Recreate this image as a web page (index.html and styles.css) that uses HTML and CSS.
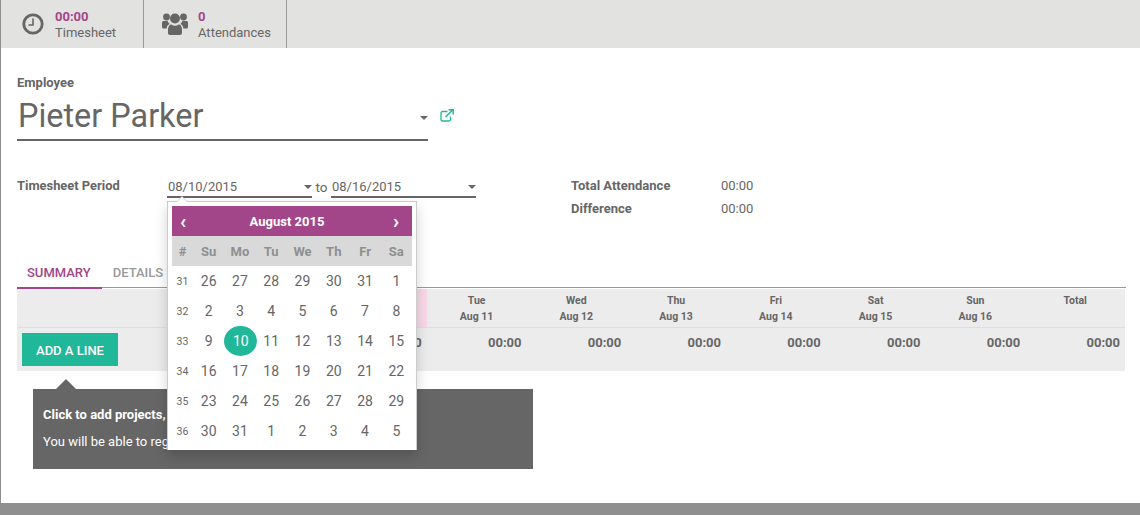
FILE: index.html
```html
<!DOCTYPE html>
<html lang="en">
<head>
<meta charset="utf-8">
<title>Timesheet</title>
<link rel="stylesheet" href="styles.css">
</head>
<body>
<div class="page">
  <div class="buttons">
    <div class="stat stat-time">
      <svg class="stat-icon" width="24" height="24" viewBox="0 0 24 24"><circle cx="12" cy="12" r="9.2" fill="none" stroke="#666" stroke-width="2.8"/><path d="M12 6.5V13H7.5" fill="none" stroke="#666" stroke-width="1.6"/></svg>
      <div class="stat-text"><span class="stat-value">00:00</span><span class="stat-label">Timesheet</span></div>
    </div>
    <div class="stat stat-att">
      <svg class="stat-icon" width="28" height="26" viewBox="0 0 28 26"><g fill="#666"><circle cx="5.5" cy="6" r="3.4"/><circle cx="22.5" cy="6" r="3.4"/><circle cx="14" cy="7.5" r="5"/><path d="M1 11.5c0-1 .8-1.500 2-1.500h3.600c.5 1.300 1.200 2.200 2.100 3-2 .7-3 2.200-3 4.500H2.500C1.500 17.500 1 16.800 1 16z"/><path d="M27 11.500c0-1-.8-1.500-2-1.500h-3.600c-.5 1.300-1.200 2.200-2.100 3 2 .7 3 2.200 3 4.500h3.200c1 0 1.500-.7 1.500-1.500z"/><path d="M7 19c0-3 1.300-5.500 3.500-5.500 1 .8 2.200 1.300 3.500 1.300s2.500-.5 3.500-1.300C20.200 13.500 21 16 21 19v3c0 1.300-.9 2-2 2H9c-1.200 0-2-.7-2-2z"/></g></svg>
      <div class="stat-text"><span class="stat-value">0</span><span class="stat-label">Attendances</span></div>
    </div>
  </div>

  <div class="sheet">
    <div class="employee-label">Employee</div>
    <div class="employee-row">
      <div class="employee-field"><span class="employee-name">Pieter Parker</span><span class="caret"></span></div>
      <svg class="ext-link" width="14" height="13" viewBox="0 0 14 13"><path d="M10.500 7.500v3c0 .8-.6 1.500-1.500 1.500H2.500C1.700 12 1 11.300 1 10.500V4c0-.8.7-1.500 1.500-1.500h5" fill="none" stroke="#21b799" stroke-width="1.300"/><path d="M5.500 8L12 1.500M8.500 .8h4.700v4.700" fill="none" stroke="#21b799" stroke-width="1.500"/></svg>
    </div>

    <div class="period-row">
      <div class="period-left">
        <span class="period-label">Timesheet Period</span>
        <div class="date-field"><span>08/10/2015</span><span class="caret"></span></div>
        <span class="to">to</span>
        <div class="date-field date-end"><span>08/16/2015</span><span class="caret"></span></div>
      </div>
      <div class="totals">
        <span class="total-label">Total Attendance</span><span class="total-value">00:00</span>
        <span class="total-label">Difference</span><span class="total-value">00:00</span>
      </div>
    </div>

    <div class="tabs">
      <span class="tab tab-active">SUMMARY</span>
      <span class="tab">DETAILS</span>
    </div>

    <table class="grid">
      <thead>
        <tr>
          <th class="col-first"></th>
          <th class="today">Mon<br>Aug 10</th>
          <th>Tue<br>Aug 11</th>
          <th>Wed<br>Aug 12</th>
          <th>Thu<br>Aug 13</th>
          <th>Fri<br>Aug 14</th>
          <th>Sat<br>Aug 15</th>
          <th>Sun<br>Aug 16</th>
          <th class="th-total">Total</th>
        </tr>
      </thead>
      <tbody>
        <tr>
          <td class="col-first"><span class="add-line">ADD A LINE</span></td>
          <td>00:00</td><td>00:00</td><td>00:00</td><td>00:00</td><td>00:00</td><td>00:00</td><td>00:00</td><td>00:00</td>
        </tr>
      </tbody>
    </table>
  </div>

  <div class="tip">
    <p class="tip-strong">Click to add projects, contracts or analytic accounts.</p>
    <p>You will be able to register your working hours and activities.</p>
  </div>

  <div class="picker">
    <div class="picker-head"><span class="nav">‹</span><span class="picker-title">August 2015</span><span class="nav nav-next">›</span></div>
    <table class="cal">
      <thead>
        <tr><th>#</th><th>Su</th><th>Mo</th><th>Tu</th><th>We</th><th>Th</th><th>Fr</th><th>Sa</th></tr>
      </thead>
      <tbody>
        <tr><td class="wk">31</td><td>26</td><td>27</td><td>28</td><td>29</td><td>30</td><td>31</td><td>1</td></tr>
        <tr><td class="wk">32</td><td>2</td><td>3</td><td>4</td><td>5</td><td>6</td><td>7</td><td>8</td></tr>
        <tr><td class="wk">33</td><td>9</td><td><span class="sel">10</span></td><td>11</td><td>12</td><td>13</td><td>14</td><td>15</td></tr>
        <tr><td class="wk">34</td><td>16</td><td>17</td><td>18</td><td>19</td><td>20</td><td>21</td><td>22</td></tr>
        <tr><td class="wk">35</td><td>23</td><td>24</td><td>25</td><td>26</td><td>27</td><td>28</td><td>29</td></tr>
        <tr><td class="wk">36</td><td>30</td><td>31</td><td>1</td><td>2</td><td>3</td><td>4</td><td>5</td></tr>
      </tbody>
    </table>
  </div>
</div>
<div class="footer-bar"></div>
</body>
</html>
```
FILE: styles.css
```css
* { box-sizing: border-box; }
html, body { margin: 0; height: 100%; overflow: hidden; }
body {
  width: 1140px;
  height: 515px;
  display: flex;
  flex-direction: column;
  background: #fff;
  font-family: Roboto, "Liberation Sans", sans-serif;
  color: #666;
  font-size: 13px;
}
.page {
  position: relative;
  flex: 1;
  border-left: 1px solid #8f8f8f;
}
.footer-bar { height: 12px; background: #8f8f8f; }

.buttons { display: flex; height: 48px; background: #e2e2e0; }
.stat {
  display: flex;
  align-items: center;
  border-right: 1px solid #999;
  width: 143px;
  padding-left: 20px;
  gap: 10px;
}
.stat-att { padding-left: 17px; gap: 9px; }
.stat-text { display: flex; flex-direction: column; line-height: 16px; padding-top: 2px; }
.stat-value { color: #a24689; font-weight: 700; font-size: 13px; }
.stat-label { font-size: 13px; color: #666; }

.sheet { padding: 27px 14px 0 16px; }
.employee-label { font-weight: 700; font-size: 13px; line-height: 16px; }
.employee-row { display: flex; align-items: flex-start; margin-top: 1px; }
.employee-field {
  width: 411px;
  height: 49px;
  border-bottom: 2px solid #666;
  display: flex;
  justify-content: space-between;
  align-items: center;
}
.employee-name { font-size: 32.400px; line-height: 38px; padding-left: 1px; }
.employee-field .caret { margin: 4px 0 0; }
.ext-link { margin: 17px 0 0 12px; }
.caret {
  width: 0;
  height: 0;
  border-left: 4px solid transparent;
  border-right: 4px solid transparent;
  border-top: 4px solid #666;
  margin-top: 1px;
}

.period-row { display: flex; margin-top: 37px; }
.period-left { display: flex; align-items: flex-start; width: 554px; }
.period-label { width: 150px; font-weight: 700; line-height: 16px; font-size: 12.900px; }
.date-field {
  width: 145px;
  height: 20px;
  border-bottom: 2px solid #666;
  display: flex;
  justify-content: space-between;
  align-items: center;
  font-size: 13px;
  line-height: 16px;
  padding: 0 0 1px 1px;
}
.to { width: 19px; text-align: center; line-height: 18px; font-size: 13.500px; }
.totals {
  display: grid;
  grid-template-columns: 150px auto;
  row-gap: 7px;
  line-height: 16px;
}
.total-label { font-weight: 700; }

.tabs { display: flex; margin-top: 48px; height: 23px; border-bottom: 1px solid #999; }
.tab { font-size: 13px; font-weight: 500; color: #999; padding: 0 10px 0 11px; line-height: 15px; margin-bottom: -1px; }
.tab-active { color: #a24689; padding: 0 11px 0 10px; border-bottom: 2px solid #a24689; height: 24px; }

.grid {
  width: 1108px;
  margin-top: 1px;
  border-collapse: collapse;
  table-layout: fixed;
  background: #ececec;
}
.grid th {
  width: 99.750px;
  height: 38px;
  border-bottom: 1px solid #ddd;
  font-size: 10.500px;
  line-height: 16px;
  font-weight: 700;
  text-align: center;
  vertical-align: top;
  padding: 4px 0 0;
  color: #666;
}
.grid th.col-first, .grid td.col-first { width: 310px; }
.grid th.today { background: #f9d8e8; }
.grid td {
  height: 44px;
  font-size: 13px;
  font-weight: 700;
  text-align: right;
  vertical-align: top;
  padding: 7px 5px 0 0;
  line-height: 16px;
}
.grid td.col-first { text-align: left; padding: 5px 0 0 5px; }
.add-line {
  display: inline-block;
  width: 96px;
  height: 33px;
  line-height: 35px;
  text-align: center;
  background: #21b799;
  color: #fff;
  font-size: 13px;
  font-weight: 500;
}

.tip {
  position: absolute;
  left: 32px;
  top: 389px;
  width: 500px;
  height: 80px;
  padding: 19px 10px 0;
  background: #666;
  color: #fff;
  font-size: 13px;
  line-height: 14px;
}
.tip::before {
  content: "";
  position: absolute;
  left: 23px;
  top: -10px;
  border-left: 10px solid transparent;
  border-right: 10px solid transparent;
  border-bottom: 10px solid #666;
}
.tip p { margin: 0 0 13px; white-space: nowrap; }
.tip-strong { font-weight: 700; }

.picker {
  position: absolute;
  left: 166px;
  top: 201px;
  width: 250px;
  height: 249px;
  padding: 4px;
  background: #fff;
  border: 1px solid #ccc;
  border-width: 1px 1px 0;
  box-shadow: 0 6px 12px rgba(0, 0, 0, .18);
}
.picker::before {
  content: "";
  position: absolute;
  left: 8px;
  top: -6px;
  border-left: 6px solid transparent;
  border-right: 6px solid transparent;
  border-bottom: 6px solid #ccc;
}
.picker::after {
  content: "";
  position: absolute;
  left: 9px;
  top: -5px;
  border-left: 5px solid transparent;
  border-right: 5px solid transparent;
  border-bottom: 5px solid #fff;
}
.picker-head {
  height: 30px;
  background: #a24689;
  color: #fff;
  font-weight: 700;
  font-size: 13px;
  display: flex;
  align-items: center;
}
.picker-title { flex: 1; text-align: center; }
.nav { width: 22px; text-align: center; font-size: 20px; line-height: 26px; font-weight: 700; }
.nav-next { width: 32px; }
.cal {
  width: 240px;
  border-collapse: collapse;
  table-layout: fixed;
}
.cal th {
  height: 30px;
  background: #d9d9d9;
  color: #8f8f8f;
  font-size: 13px;
  font-weight: 700;
  padding: 0;
}
.cal th:first-child, .cal td.wk { width: 21px; }
.cal td {
  height: 30px;
  padding: 0;
  text-align: center;
  font-size: 14px;
  color: #666;
}
.cal td.wk { font-size: 10.500px; }
.sel {
  display: block;
  width: 33px;
  height: 30px;
  line-height: 30px;
  margin: 0 auto;
  border-radius: 50%;
  background: #21b799;
  color: #fff;
}
```
